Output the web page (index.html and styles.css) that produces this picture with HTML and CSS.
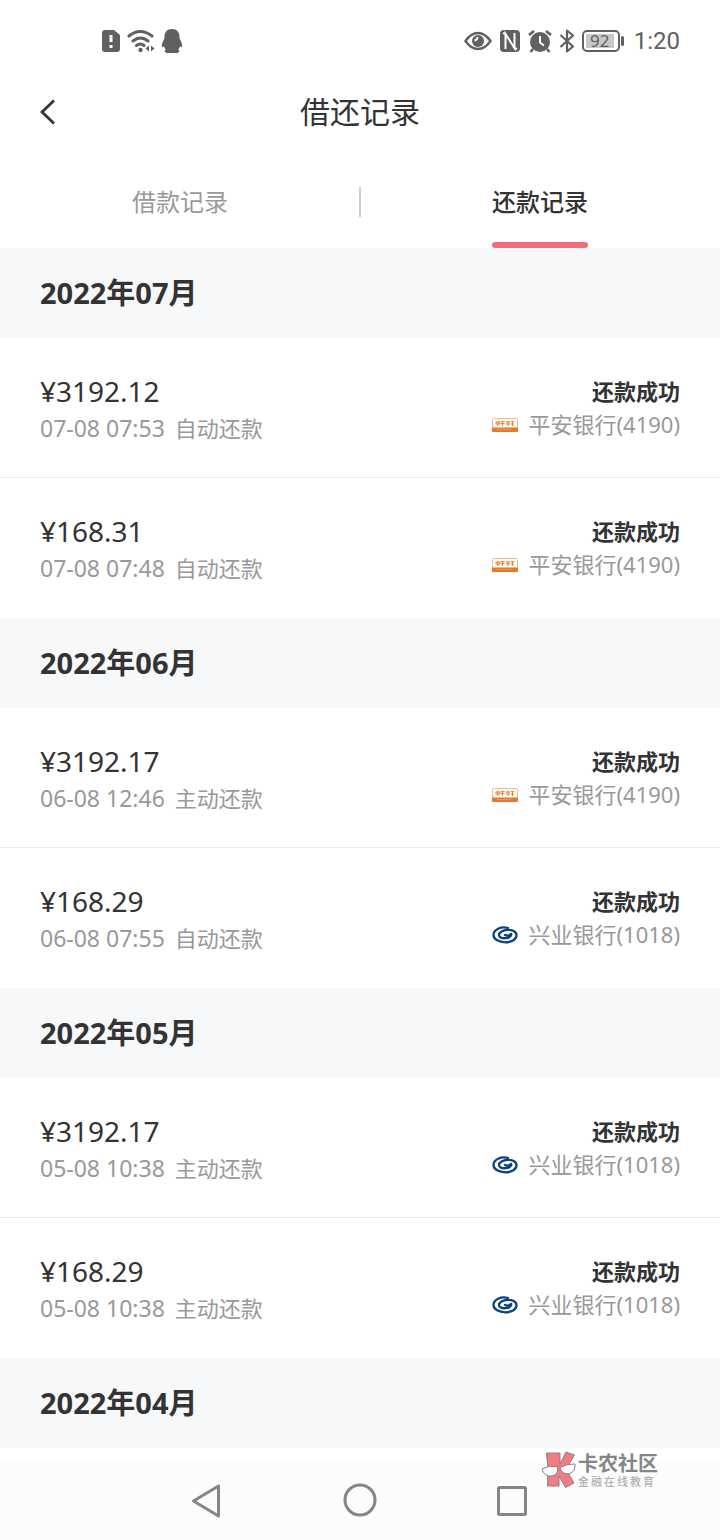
FILE: index.html
```html
<!DOCTYPE html>
<html lang="zh-CN">
<head>
    <meta charset="UTF-8">
    <meta name="viewport" content="width=device-width, initial-scale=1.0">
    <title>借还记录</title>
    <link rel="stylesheet" href="styles.css">
</head>
<body>
    <!-- shared bank logos -->
    <svg class="sprite" aria-hidden="true">
        <symbol id="pingan" viewBox="0 0 26 14">
            <rect x="0.5" y="0.5" width="25" height="12" rx="1" fill="#fffaf4" stroke="#f2b98a"/>
            <path d="M0 9.500h26V13q0 1-1 1H1q-1 0-1-1z" fill="#e8792b"/>
            <path d="M4 4h4v2H4zM6 3v5M9 3.500h3.500M9 5.500h3.500M10.500 3v5M14 4h4M14 6h4M16 3v5M19 3.500h3M19 6h3M20.500 3v5" fill="none" stroke="#ea8138" stroke-width="1"/>
            <path d="M5 11.500h15" stroke="#f0a56c" stroke-width="1" stroke-dasharray="2 1"/>
        </symbol>
        <symbol id="xingye" viewBox="0 0 26 18">
            <path d="M16 2C9 0 1.500 3.500 1.500 9c0 4.500 5.500 7.300 12 7.300S24.500 13.200 24.500 9.300C24.500 5.500 20 3.600 15.500 3.900 11 4.200 7 6.300 7 9c0 2.400 3 3.500 6.500 3.200 3.300-.3 5.700-2 5.800-4.200-2 1.700-4.300 1.900-6.300 1" fill="none" stroke="#0b4182" stroke-width="2.300" stroke-linecap="round" stroke-linejoin="round"/>
        </symbol>
    </svg>

    <div class="status-bar">
        <div class="status-icons">
            <svg width="20" height="24" viewBox="0 0 20 24">
                <path d="M4 1h9l6 5v14q0 3-3 3H4q-3 0-3-3V4q0-3 3-3z" fill="#606060"/>
                <path d="M10 6v7M10 16v3" stroke="#fff" stroke-width="3"/>
            </svg>
            <svg width="28" height="24" viewBox="0 0 28 24">
                <g fill="none" stroke="#606060" stroke-width="3" stroke-linecap="round">
                    <path d="M2 7q11-9 23 0M6 12q7.500-6 15 0M9.500 16.500q4-3 7.500 0"/>
                </g>
                <circle cx="13.500" cy="21" r="2.200" fill="#606060"/>
                <path d="M22 16.500v6L18.500 19.500zM24 16.500v6l3.500-3z" fill="#606060"/>
            </svg>
            <svg width="22" height="24" viewBox="0 0 22 24">
                <path d="M11 0C6 0 3.500 3.500 3.500 8c0 1-.2 2-.8 3C1 14 .5 16.500 1.200 18c.4.600 1.200 0 1.800-.8.300 1.200.9 2.300 1.900 3.300-2 .9-1.400 3.500 1.600 3.500h9c3 0 3.600-2.600 1.600-3.500 1-1 1.600-2.100 1.900-3.300.6.800 1.400 1.400 1.800.8.700-1.500.2-4-1.500-7-.6-1-.8-2-.8-3C18.500 3.500 16 0 11 0z" fill="#606060"/>
            </svg>
        </div>
        <div class="status-icons right">
            <svg width="28" height="20" viewBox="0 0 28 20">
                <path d="M1.500 10Q7 2 14 2t12.500 8Q21 18 14 18T1.500 10z" fill="none" stroke="#606060" stroke-width="2.400"/>
                <circle cx="14" cy="10" r="6" fill="#606060"/>
                <path d="M13.500 6q0 3-3 3.500" fill="none" stroke="#fff" stroke-width="1.800"/>
            </svg>
            <svg width="22" height="24" viewBox="0 0 22 24">
                <rect x="1" y="1" width="20" height="22" rx="4" fill="#606060"/>
                <path d="M6.500 20V5l9 14V4M6.500 5L4 4M15.500 19l2.500 1" fill="none" stroke="#fff" stroke-width="2"/>
            </svg>
            <svg width="24" height="24" viewBox="0 0 24 24">
                <circle cx="12" cy="13" r="10" fill="#606060"/>
                <path d="M1 6l5-4M23 6l-5-4M5 20l-2.500 3M19 20l2.500 3" stroke="#606060" stroke-width="2.600"/>
                <path d="M12 7v6.500l4 3" fill="none" stroke="#fff" stroke-width="2"/>
            </svg>
            <svg width="16" height="24" viewBox="0 0 16 24">
                <path d="M1.500 6L14 17.500 8 22.500v-21l6 5L1.500 18" fill="none" stroke="#606060" stroke-width="2.200" stroke-linejoin="round"/>
            </svg>
            <span class="battery"><span class="battery-level">92</span></span>
            <span class="clock">1:20</span>
        </div>
    </div>

    <header class="title-bar">
        <button class="back" type="button" aria-label="返回">
            <svg width="16" height="28" viewBox="0 0 16 28">
                <path d="M14 2.500L2 14l12 11.500" fill="none" stroke="#333" stroke-width="2.800"/>
            </svg>
        </button>
        <h1>借还记录</h1>
    </header>

    <nav class="tabs">
        <a class="tab" href="#borrow">借款记录</a>
        <a class="tab active" href="#repay">还款记录</a>
    </nav>

    <main id="repay">
        <section>
            <h2>2022年07月</h2>
            <ul class="records">
                <li class="record">
                    <div>
                        <p class="amount">¥3192.12</p>
                        <p class="detail"><span class="time">07-08 07:53</span><span>自动还款</span></p>
                    </div>
                    <div class="result">
                        <p class="state">还款成功</p>
                        <p class="bank"><svg class="logo"><use href="#pingan"/></svg>平安银行(4190)</p>
                    </div>
                </li>
                <li class="record">
                    <div>
                        <p class="amount">¥168.31</p>
                        <p class="detail"><span class="time">07-08 07:48</span><span>自动还款</span></p>
                    </div>
                    <div class="result">
                        <p class="state">还款成功</p>
                        <p class="bank"><svg class="logo"><use href="#pingan"/></svg>平安银行(4190)</p>
                    </div>
                </li>
            </ul>
        </section>

        <section>
            <h2>2022年06月</h2>
            <ul class="records">
                <li class="record">
                    <div>
                        <p class="amount">¥3192.17</p>
                        <p class="detail"><span class="time">06-08 12:46</span><span>主动还款</span></p>
                    </div>
                    <div class="result">
                        <p class="state">还款成功</p>
                        <p class="bank"><svg class="logo"><use href="#pingan"/></svg>平安银行(4190)</p>
                    </div>
                </li>
                <li class="record">
                    <div>
                        <p class="amount">¥168.29</p>
                        <p class="detail"><span class="time">06-08 07:55</span><span>自动还款</span></p>
                    </div>
                    <div class="result">
                        <p class="state">还款成功</p>
                        <p class="bank"><svg class="logo xingye"><use href="#xingye"/></svg>兴业银行(1018)</p>
                    </div>
                </li>
            </ul>
        </section>

        <section>
            <h2>2022年05月</h2>
            <ul class="records">
                <li class="record">
                    <div>
                        <p class="amount">¥3192.17</p>
                        <p class="detail"><span class="time">05-08 10:38</span><span>主动还款</span></p>
                    </div>
                    <div class="result">
                        <p class="state">还款成功</p>
                        <p class="bank"><svg class="logo xingye"><use href="#xingye"/></svg>兴业银行(1018)</p>
                    </div>
                </li>
                <li class="record">
                    <div>
                        <p class="amount">¥168.29</p>
                        <p class="detail"><span class="time">05-08 10:38</span><span>主动还款</span></p>
                    </div>
                    <div class="result">
                        <p class="state">还款成功</p>
                        <p class="bank"><svg class="logo xingye"><use href="#xingye"/></svg>兴业银行(1018)</p>
                    </div>
                </li>
            </ul>
        </section>

        <section>
            <h2>2022年04月</h2>
        </section>
    </main>

    <footer class="system-nav">
        <button type="button" aria-label="后退">
            <svg width="36" height="36" viewBox="0 0 36 36">
                <path d="M29.500 4v30L4.500 19z" fill="none" stroke="#858585" stroke-width="3" stroke-linejoin="round"/>
            </svg>
        </button>
        <button type="button" aria-label="主屏幕">
            <svg width="36" height="36" viewBox="0 0 36 36">
                <circle cx="18" cy="18" r="15" fill="none" stroke="#858585" stroke-width="3"/>
            </svg>
        </button>
        <button type="button" aria-label="最近任务">
            <svg width="36" height="36" viewBox="0 0 36 36">
                <rect x="3.500" y="5.500" width="27" height="27" rx="1" fill="none" stroke="#858585" stroke-width="3"/>
            </svg>
        </button>
        <div class="watermark">
            <svg width="36" height="38" viewBox="0 0 36 38">
                <g fill="#f27c83" stroke="#8a8083" stroke-width="1">
                    <path d="M5.500 2H19v11l6-12 8.500 3L25 18l8 14-8.500 4.500L18 25v10H6.500L7 18z"/>
                </g>
                <g fill="#fff" stroke="#8a8083" stroke-width="1">
                    <path d="M1 18q7-4 15.500-2.500 1.500 8-5.500 9.500Q3 26 1 18z"/>
                    <path d="M19 16.500Q26 12.500 34 13q.5 8-5.500 9.500-7.500 1.500-9.500-6z"/>
                </g>
            </svg>
            <div>
                <p class="mark-name">卡农社区</p>
                <p class="mark-slogan">金融在线教育</p>
            </div>
        </div>
    </footer>
</body>
</html>
```
FILE: styles.css
```css
* {
    box-sizing: border-box;
}

body {
    margin: 0;
    min-height: 100vh;
    display: flex;
    flex-direction: column;
    font-family: "Noto Sans", "Noto Sans CJK SC", sans-serif;
    color: #333;
    background-color: #fff;
}

h1, h2, p, ul {
    margin: 0;
    padding: 0;
}

button {
    display: flex;
    padding: 0;
    border: none;
    background: none;
    cursor: pointer;
}

.sprite {
    position: absolute;
    width: 0;
    height: 0;
}

/* status bar */
.status-bar {
    display: flex;
    justify-content: space-between;
    align-items: center;
    height: 82px;
    padding: 0 40px 0 101px;
}

.status-icons {
    display: flex;
    align-items: center;
    gap: 6px;
    color: #606060;
}

.status-icons.right {
    gap: 7px;
}

.battery {
    position: relative;
    width: 38px;
    height: 22px;
    padding: 2px;
    border: 2px solid #606060;
    border-radius: 5px;
}

.battery::after {
    content: "";
    position: absolute;
    top: 4px;
    right: -6px;
    width: 3px;
    height: 10px;
    border-radius: 2px;
    background-color: #606060;
}

.battery-level {
    display: block;
    width: 28px;
    background-color: #c8c8c8;
    font-size: 17px;
    line-height: 14px;
    text-align: center;
}

.clock {
    margin-left: 7px;
    font-family: Roboto, sans-serif;
    font-size: 24px;
    line-height: 24px;
}

/* title */
.title-bar {
    display: grid;
    grid-template-columns: 1fr auto 1fr;
    align-items: center;
    height: 60px;
    padding: 0 40px;
}

h1 {
    font-size: 30px;
    font-weight: 400;
    line-height: 40px;
}

/* tabs */
.tabs {
    display: flex;
    padding-top: 14px;
    background: linear-gradient(#ccc, #ccc) center 45px / 2px 30px no-repeat;
}

.tab {
    flex: 1;
    display: flex;
    flex-direction: column;
    align-items: center;
    color: #999;
    font-size: 24px;
    line-height: 92px;
    text-decoration: none;
}

.tab.active {
    color: #333;
    font-weight: 500;
}

.tab.active::after {
    content: "";
    width: 96px;
    height: 6px;
    margin-top: -6px;
    border-radius: 3px;
    background-color: #ee6f7c;
}

/* records */
h2 {
    padding: 0 40px;
    background-color: #f7f8fa;
    font-size: 29px;
    font-weight: 700;
    line-height: 90px;
}

.records {
    list-style: none;
}

.record {
    display: flex;
    justify-content: space-between;
    height: 140px;
    padding: 33px 40px 0;
    border-bottom: 1px solid #ebebeb;
}

.record:last-child {
    border-bottom: none;
}

.amount {
    font-size: 28px;
    line-height: 40px;
}

.detail {
    display: flex;
    gap: 10px;
    color: #999;
    font-size: 22px;
    line-height: 34px;
}

.time {
    font-size: 23px;
}

.result {
    text-align: right;
}

.state {
    font-size: 22px;
    font-weight: 700;
    line-height: 40px;
}

.bank {
    display: flex;
    align-items: center;
    justify-content: flex-end;
    color: #999;
    font-size: 22px;
    line-height: 26px;
}

.logo {
    width: 26px;
    height: 14px;
    margin: 2px 10px 0 0;
}

.logo.xingye {
    height: 18px;
}

/* system navigation */
.system-nav {
    position: relative;
    display: flex;
    justify-content: center;
    align-items: center;
    gap: 117px;
    height: 80px;
    margin-top: auto;
    background-color: #fcfcfc;
}

.watermark {
    position: absolute;
    top: -9px;
    right: 62px;
    display: flex;
    gap: 1px;
}

.mark-name {
    color: #858585;
    font-size: 20px;
    font-weight: 700;
    line-height: 26px;
}

.mark-slogan {
    color: #b0b0b0;
    font-size: 11px;
    font-weight: 500;
    letter-spacing: 2px;
    line-height: 10px;
}
```
